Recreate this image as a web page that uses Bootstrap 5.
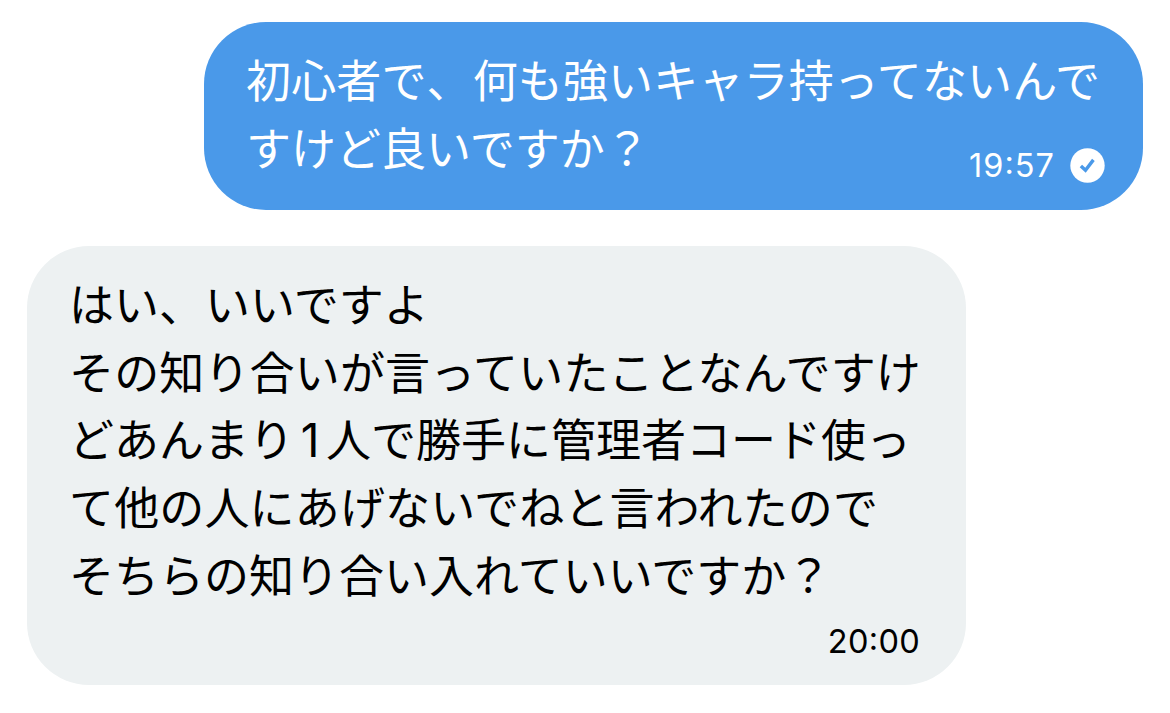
<!DOCTYPE html>
<html lang="ja">
<head>
<meta charset="utf-8">
<meta name="viewport" content="width=device-width, initial-scale=1">
<title>Messages</title>
<link href="https://cdn.jsdelivr.net/npm/bootstrap@5.3.0/dist/css/bootstrap.min.css" rel="stylesheet">
<style>
  body { background: #fff; font-family: "Noto Sans CJK JP", sans-serif; overflow: hidden; }
  .thread { padding: 22px 27px 0; gap: 36.5px; }
  .bubble { width: 939px; border-radius: 62px; padding: 23px 0 0 42px; font-size: 45px; line-height: 67.7px; white-space: nowrap; position: relative; }
  .sent { height: 187.5px; background: #4a99e9; color: #fff; }
  .received { height: 439px; background: #edf1f2; color: #000; }
  .stamp { position: absolute; font-family: Inter, sans-serif; font-size: 32.5px; line-height: 36px; gap: 15px; letter-spacing: .3px; font-feature-settings: "case"; }
  .sent .stamp { right: 38px; bottom: 26px; letter-spacing: 1px; }
  .received .stamp { right: 46px; bottom: 25px; }
  .digit { font-family: Inter, sans-serif; display: inline-block; width: 32px; text-align: center; line-height: 1; font-size: 46px; }
  .comma { letter-spacing: 1px; }
  .loose { letter-spacing: .15px; }
</style>
</head>
<body>
<main class="thread d-flex flex-column">
  <article class="bubble sent align-self-end">
    <div class="loose">初心者で<span class="comma">、</span>何も強いキャラ持ってないんで</div>
    <div>すけど良いですか？</div>
    <div class="stamp d-flex align-items-center">
      <time>19:57</time>
      <svg width="35" height="35" viewBox="0 0 35 35" aria-hidden="true"><circle cx="17.5" cy="17.5" r="17.2" fill="#fff"/><path d="M10.9 17.9l4.6 4.4 7.9-10.4" fill="none" stroke="#4a99e9" stroke-width="3.4"/></svg>
    </div>
  </article>
  <article class="bubble received align-self-start">
    <div>はい<span class="comma">、</span>いいですよ</div>
    <div class="loose">その知り合いが言っていたことなんですけ</div>
    <div>どあんまり<span class="digit">1</span>人で勝手に管理者コード使っ</div>
    <div class="loose">て他の人にあげないでねと言われたので</div>
    <div>そちらの知り合い入れていいですか？</div>
    <div class="stamp"><time>20:00</time></div>
  </article>
</main>
<script src="https://cdn.jsdelivr.net/npm/bootstrap@5.3.0/dist/js/bootstrap.bundle.min.js"></script>
</body>
</html>
